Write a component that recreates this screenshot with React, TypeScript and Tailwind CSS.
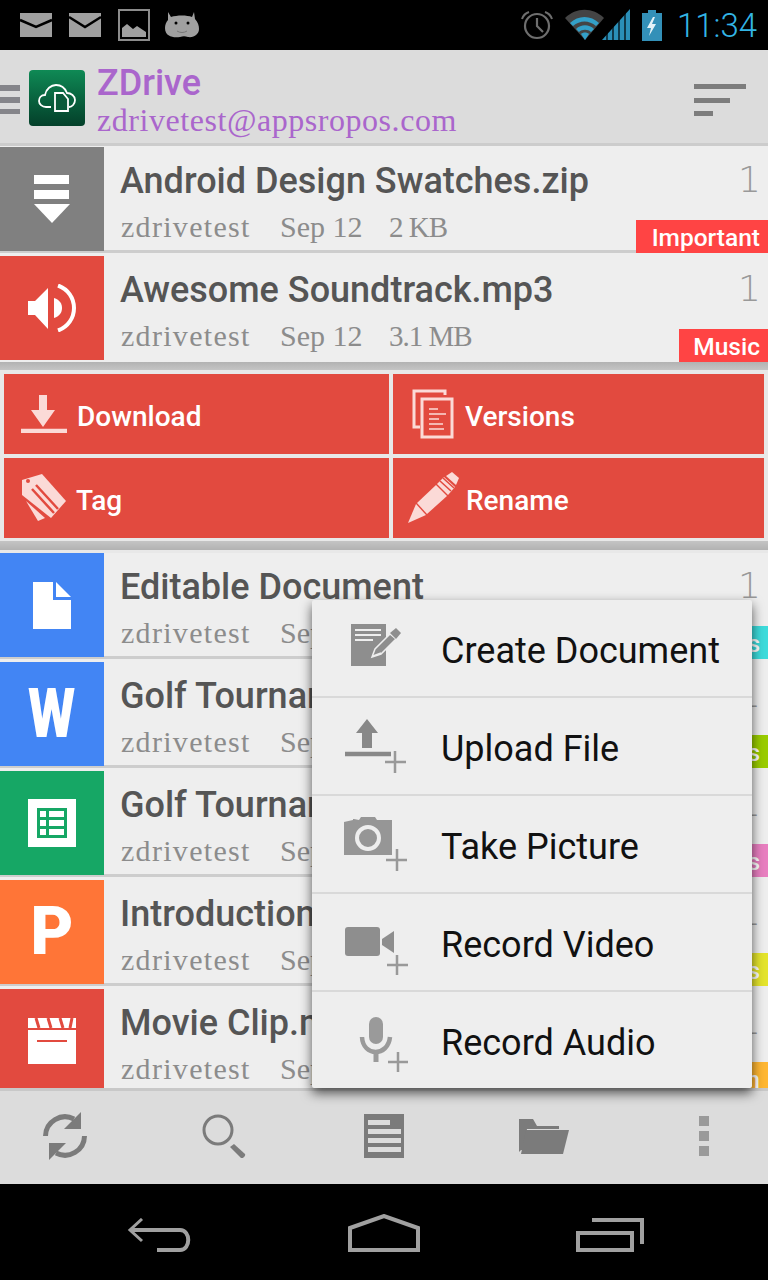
import React from 'react';

const files = [
  { name: 'Editable Document', color: 'bg-[#4285f4]', icon: 'doc', label: 'Docs', labelColor: 'bg-[#3ddbdb]' },
  { name: 'Golf Tournament.doc', color: 'bg-[#4285f4]', icon: 'word', label: 'Docs', labelColor: 'bg-[#99cc00]' },
  { name: 'Golf Tournament.xls', color: 'bg-[#16a765]', icon: 'sheet', label: 'Sheets', labelColor: 'bg-[#e87fc0]' },
  { name: 'Introduction.ppt', color: 'bg-[#ff7537]', icon: 'ppt', label: 'Slides', labelColor: 'bg-[#e4e42c]' },
  { name: 'Movie Clip.mp4', color: 'bg-[#e24a3f]', icon: 'movie', label: 'Fun', labelColor: 'bg-[#ffb733]' },
];

const roboto = 'font-["Roboto",sans-serif]';
const slab = 'font-["Liberation_Serif",serif]';

const Mail = ({ open }: { open?: boolean }) => (
  <svg width="34" height="26" viewBox="0 0 34 26">
    <path d="M1 1h32v24H1z" fill="#a0a0a0" />
    <path d={open ? 'M1 5l16 10L33 5' : 'M1 8l16 7 16-7'} fill="none" stroke="#000" strokeWidth="2.5" />
  </svg>
);

const FileIcon = ({ icon }: { icon: string }) => {
  if (icon === 'doc') {
    return (
      <svg width="38" height="47" viewBox="0 0 38 47">
        <path d="M0 0h20v18h18v29H0z" fill="#fff" />
        <path d="M23 0l15 15H23z" fill="#fff" />
      </svg>
    );
  }
  if (icon === 'word') {
    return <span className={`${roboto} text-[68px] leading-none font-black text-white scale-x-[.8]`}>W</span>;
  }
  if (icon === 'ppt') {
    return <span className={`${roboto} text-[66px] leading-none font-black text-white`}>P</span>;
  }
  if (icon === 'sheet') {
    return (
      <svg width="48" height="48" viewBox="0 0 48 48">
        <path d="M0 0h48v48H0z" fill="#fff" />
        <path d="M9 9h30v30H9z" fill="#16a765" />
        <path d="M12 12h6v6h-6zM21 12h15v6H21zM12 21h6v6h-6zM21 21h15v6H21zM12 30h6v6h-6zM21 30h15v6H21z" fill="#fff" />
      </svg>
    );
  }
  if (icon === 'movie') {
    return (
      <svg width="48" height="46" viewBox="0 0 48 46">
        <path d="M0 0h48v10H0z" fill="#fff" />
        <path d="M8 0l3 10M20 0l3 10M32 0l3 10M44 0l-2 10" stroke="#e24a3f" strokeWidth="3" />
        <path d="M0 12h48v34H0z" fill="#fff" />
        <path d="M9 23h30" stroke="#e24a3f" strokeWidth="2" />
      </svg>
    );
  }
  if (icon === 'zip') {
    return (
      <svg width="36" height="48" viewBox="0 0 36 48">
        <path d="M0 0h35v9H0zM0 15h35v9H0z" fill="#fff" />
        <path d="M0 29h36L18 48z" fill="#fff" />
      </svg>
    );
  }
  return (
    <svg width="48" height="48" viewBox="0 0 48 48">
      <path d="M0 17h7L20 4v41L7 31H0z" fill="#fff" />
      <path d="M26 14c6 2 8 6 8 10s-2 8-8 10z" fill="#fff" />
      <path d="M30 1.5C40 5 46 14 46 24S40 43 30 46.5" fill="none" stroke="#fff" strokeWidth="4" />
    </svg>
  );
};

const Row = ({ name, color, icon, size, label, labelColor, labelWidth, flat }: {
  name: string; color: string; icon: string; size?: string; label: string; labelColor: string; labelWidth: string; flat?: boolean;
}) => (
  <div className={`relative flex h-[106px] shrink-0 bg-[#eeeeee] ${flat ? '' : 'mb-[3px] border-b-[3px] border-[#cdcdcd]'}`}>
    <div className={`flex h-[104px] w-[104px] shrink-0 items-center justify-center ${color}`}>
      <FileIcon icon={icon} />
    </div>
    <div className="min-w-0 flex-1 pl-[17px]">
      <div className={`${roboto} mt-[11px] ml-[-1px] h-[46px] text-[36px] leading-[46px] font-medium whitespace-nowrap text-[#555555]`}>{name}</div>
      <div className={`${slab} mt-[5px] flex text-[30px] leading-[36px] text-[#8c8c8c]`}>
        <span className="w-[159px] tracking-[1.3px]">zdrivetest</span>
        <span className="w-[109px]">Sep 12</span>
        {size && <span className="text-[29px] tracking-[-1px]">{size}</span>}
      </div>
    </div>
    <div className='absolute top-[10px] right-[7px] font-["DejaVu_Sans",sans-serif] text-[36px] leading-[46px] font-extralight text-[#999999]'>1</div>
    <div className={`${roboto} absolute right-0 flex h-[33px] items-center justify-end pt-[4px] pr-[8px] text-[24.5px] font-medium text-white ${flat ? 'bottom-0' : 'bottom-[-3px]'} ${labelWidth} ${labelColor}`}>{label}</div>
  </div>
);

const menuItems = [
  {
    name: 'Create Document',
    icon: (
      <svg width="60" height="50" viewBox="0 0 60 50" className="mt-[-4px]">
        <path d="M7 3h35v42H7z" fill="#8e8e8e" />
        <path d="M11 9h26M11 14h26M11 19h18" stroke="#eeeeee" strokeWidth="2" />
        <path d="M28 36l3-8 15-15 6 5-15 15z" fill="#8e8e8e" stroke="#eeeeee" strokeWidth="1.5" />
        <path d="M46 12l6-5 5 5-5 6z" fill="#8e8e8e" />
        <path d="M29 35l8-3" stroke="#eeeeee" strokeWidth="1.5" />
      </svg>
    ),
  },
  {
    name: 'Upload File',
    icon: (
      <svg width="64" height="54" viewBox="0 0 64 54">
        <path d="M23 0l11 14h-6v15h-10V14h-6z" fill="#888888" />
        <path d="M1 35h46" stroke="#888888" strokeWidth="4.5" />
        <path d="M51 32v22M41 43h21" stroke="#999999" strokeWidth="2.5" />
      </svg>
    ),
  },
  {
    name: 'Take Picture',
    icon: (
      <svg width="64" height="54" viewBox="0 0 64 54">
        <path d="M0 5l9-2v-1h1l5 1 2-3h14l2 3h15v35H0z" fill="#969696" />
        <circle cx="24" cy="21" r="11" fill="#969696" stroke="#eeeeee" strokeWidth="4" />
        <path d="M53 32v22M42 43h21" stroke="#999999" strokeWidth="2.5" />
      </svg>
    ),
  },
  {
    name: 'Record Video',
    icon: (
      <svg width="64" height="50" viewBox="0 0 64 50" className="mt-[20px]">
        <rect x="1" y="0" width="35" height="29" rx="3" fill="#8e8e8e" />
        <path d="M38 12l12-8v22l-12-8z" fill="#8e8e8e" />
        <path d="M53 28v20M43 38h21" stroke="#999999" strokeWidth="2.5" />
      </svg>
    ),
  },
  {
    name: 'Record Audio',
    icon: (
      <svg width="64" height="64" viewBox="0 0 64 64">
        <rect x="25" y="9" width="14" height="27" rx="7" fill="#9a9a9a" />
        <path d="M18 29c1 20 26 20 28 0" fill="none" stroke="#9a9a9a" strokeWidth="4.5" />
        <path d="M32 42v12" stroke="#9a9a9a" strokeWidth="5" />
        <path d="M54 44v20M44 54h20" stroke="#999999" strokeWidth="2.5" />
      </svg>
    ),
  },
];

export default function App() {
  return (
    <div className="relative flex h-[1280px] w-[768px] flex-col overflow-hidden bg-black">
      {/* Status bar */}
      <div className="flex h-[50px] shrink-0 items-center bg-black pl-[19px]">
        <Mail />
        <div className="ml-[15px]"><Mail open /></div>
        <svg width="32" height="32" viewBox="0 0 32 32" className="ml-[16px]">
          <path d="M1 1h30v30H1z" fill="none" stroke="#8c8c8c" strokeWidth="2" />
          <path d="M4 28v-9l5-4 6 5 4-3 9 6v5z" fill="#a0a0a0" />
        </svg>
        <svg width="34" height="26" viewBox="0 0 34 26" className="ml-[15px]">
          <path d="M3 0l3 5c6-2 16-2 21 0l2-5 1 7c3 3 4 7 4 10 0 5-5 9-11 8-3-1-5-1-8 0-6 1-15 0-15-9 0-3 1-6 3-8z" fill="#a0a0a0" />
          <circle cx="11" cy="11" r="1.5" fill="#000" />
          <circle cx="23" cy="11" r="1.5" fill="#000" />
          <path d="M12 19c3 2 7 2 10 0" stroke="#777" fill="none" />
        </svg>
        <svg width="32" height="30" viewBox="0 0 32 30" className="ml-[322px]">
          <circle cx="16" cy="16" r="12" fill="none" stroke="#6e6e6e" strokeWidth="2.2" />
          <path d="M16 8v8l6 6" fill="none" stroke="#6e6e6e" strokeWidth="2.2" />
          <path d="M1 9c1-3 4-6 7-7M31 9c-1-3-4-6-7-7" fill="none" stroke="#6e6e6e" strokeWidth="2" />
        </svg>
        <svg width="66" height="32" viewBox="0 0 66 32" className="ml-[12px]">
          <path d="M0 9C11-2 28-2 39 9L20 31z" fill="#444444" />
          <path d="M5 14C13 6 26 6 34 14l-3 3C24 11 15 11 8 17z" fill="#33a0c8" />
          <path d="M11 20c5-5 13-5 18 0l-3 3c-3-3-9-3-12 0z" fill="#33a0c8" />
          <path d="M16 25c2-2 6-2 8 0l-4 6z" fill="#33a0c8" />
          <path d="M37 31L65 0v31z" fill="#2a8fb8" />
          <path d="M42 20v11M48 14v17M54 8v23M60 2v29" stroke="#000" strokeWidth="1.2" />
        </svg>
        <svg width="20" height="31" viewBox="0 0 20 31" className="ml-[11px]">
          <path d="M6 0h8v3h6v28H0V3h6z" fill="#3390b8" />
          <path d="M11 7l-6 11h4l-2 8 7-12h-4l3-7z" fill="#e3f2f8" />
        </svg>
        <span className={`${roboto} ml-[15px] text-[33px] leading-none font-light text-[#33b5e5]`}>11:34</span>
      </div>

      {/* Header */}
      <div className="flex h-[93px] shrink-0 items-center bg-[#dcdcdc] pr-[22px]">
        <div className="mt-[6px] flex w-[20px] flex-col">
          <div className="h-[6px] bg-[#85858a]" />
          <div className="mt-[6px] h-[6px] bg-[#85858a]" />
          <div className="mt-[6px] h-[5px] bg-[#85858a]" />
        </div>
        <div className="mt-[3px] ml-[9px] flex h-[56px] w-[56px] items-center justify-center rounded-[4px] bg-gradient-to-b from-[#0f8a55] to-[#04402a]">
          <svg width="38" height="30" viewBox="0 0 38 30">
            <path d="M13 24H8c-4 0-7-3-7-6 0-3 2-6 6-6 1-6 6-10 11-10 5 0 9 3 11 8 4 0 8 3 8 7 0 4-3 7-6 7" fill="none" stroke="#fff" strokeWidth="1.8" />
            <path d="M17 10h8l5 6v12H17z" fill="#0a5a3a" stroke="#fff" strokeWidth="1.8" />
          </svg>
        </div>
        <div className="mt-[6px] ml-[12px] flex-1 text-[#aa66cc]">
          <div className={`${roboto} text-[36px] leading-[42px] font-medium`}>ZDrive</div>
          <div className={`${slab} text-[32px] leading-[33px] tracking-[0.55px]`}>zdrivetest@appsropos.com</div>
        </div>
        <div className="mt-[6px] flex w-[52px] flex-col">
          <div className="h-[5px] w-[52px] bg-[#7d7d7d]" />
          <div className="mt-[9px] h-[5px] w-[36px] bg-[#7d7d7d]" />
          <div className="mt-[8px] h-[5px] w-[19px] bg-[#7d7d7d]" />
        </div>
      </div>
      <div className="h-[4px] shrink-0 border-t-[3px] border-[#cccccc] bg-[#eeeeee]" />

      {/* List */}
      <div className="min-h-0 flex-1 overflow-hidden bg-[#eeeeee]">
        <Row name="Android Design Swatches.zip" color="bg-[#808080]" icon="zip" size="2 KB" label="Important" labelColor="bg-[#ff4444]" labelWidth="w-[132px]" />
        <Row name="Awesome Soundtrack.mp3" color="bg-[#e24a3f]" icon="audio" size="3.1 MB" label="Music" labelColor="bg-[#ff4444]" labelWidth="w-[89px]" flat />

        {/* Expanded actions */}
        <div className="flex h-[191px] flex-col bg-[#e8e8e8]">
          <div className="h-[8px] shrink-0 bg-gradient-to-b from-[#b2b2b2] to-[#c4c4c4]" />
          <div className={`${roboto} mt-[4px] grid grid-cols-[385px_371px] grid-rows-[80px_80px] gap-[4px] px-[4px] text-[28px] font-medium text-white`}>
            <div className="flex items-center bg-[#e24a3f] pl-[17px]">
              <svg width="46" height="38" viewBox="0 0 46 38">
                <path d="M18 0h8v15h8L22 32 10 15h8z" fill="#fbdad7" />
                <path d="M0 36h46" stroke="#fbdad7" strokeWidth="4.5" />
              </svg>
              <span className="mt-[5px] ml-[10px]">Download</span>
            </div>
            <div className="flex items-center bg-[#e24a3f] pl-[19px]">
              <svg width="42" height="50" viewBox="0 0 42 50">
                <path d="M8 38H2V2h31v4" fill="none" stroke="#fbdad7" strokeWidth="3" />
                <path d="M10 10h30v38H10z" fill="none" stroke="#fbdad7" strokeWidth="3" />
                <path d="M17 20h9M17 25h17M17 30h10M17 35h14M17 40h15" stroke="#fbdad7" strokeWidth="1.6" />
              </svg>
              <span className="mt-[5px] ml-[11px]">Versions</span>
            </div>
            <div className="flex items-center bg-[#e24a3f] pl-[18px]">
              <svg width="44" height="48" viewBox="0 0 44 48">
                <path d="M0 6l20-6 24 27-15 17L0 21z" fill="#fbdad7" />
                <circle cx="6" cy="7" r="2" fill="#e24a3f" />
                <path d="M9 16l22 24M13 12l22 24" stroke="#e24a3f" strokeWidth="2.5" transform="translate(1 -1)" />
                <path d="M4 27l12 20 7-3" fill="#fbdad7" />
              </svg>
              <span className="mt-[5px] ml-[10px]">Tag</span>
            </div>
            <div className="flex items-center bg-[#e24a3f] pl-[15px]">
              <svg width="51" height="52" viewBox="0 0 51 52">
                <path d="M0 51l8-19 10 11z" fill="#fbdad7" />
                <path d="M9 31l19-18 11 11-20 18z" fill="#fbdad7" />
                <path d="M29 12l7-7 11 10-7 8z" fill="#fbdad7" />
                <path d="M32 9l11 10M35 6l11 10" stroke="#e24a3f" strokeWidth="1.6" />
                <path d="M38 4l6-4 7 6-3 7z" fill="#fbdad7" />
              </svg>
              <span className="mt-[5px] ml-[7px]">Rename</span>
            </div>
          </div>
          <div className="mt-[3px] h-[9px] shrink-0 bg-gradient-to-b from-[#c4c4c4] to-[#b2b2b2]" />
        </div>

        {files.map((file) => (
          <Row key={file.icon} name={file.name} color={file.color} icon={file.icon} label={file.label} labelColor={file.labelColor} labelWidth="w-[132px]" />
        ))}
      </div>

      {/* Bottom bar */}
      <div className="flex h-[96px] shrink-0 items-center border-t-[3px] border-[#c8c8c8] bg-[#dcdcdc] pb-[3px] pl-[43px]">
        <svg width="44" height="48" viewBox="0 0 44 48">
          <path d="M2.5 24A19.5 19.5 0 0 1 31 7" fill="none" stroke="#7b7b7b" strokeWidth="5" />
          <path d="M38 0v17H21z" fill="#7b7b7b" />
          <path d="M41.5 24A19.5 19.5 0 0 1 13 41" fill="none" stroke="#7b7b7b" strokeWidth="5" />
          <path d="M6 48V31h17z" fill="#7b7b7b" />
        </svg>
        <svg width="44" height="44" viewBox="0 0 44 44" className="ml-[115px]">
          <circle cx="16" cy="16" r="14" fill="none" stroke="#7b7b7b" strokeWidth="3" />
          <path d="M32 30l11 10c1 2-2 5-4 4L28 33z" fill="#7b7b7b" />
        </svg>
        <svg width="40" height="44" viewBox="0 0 40 44" className="ml-[118px]">
          <path d="M0 0h40v44H0z" fill="#7b7b7b" />
          <path d="M4 6h22v5H4zM4 15h33v5H4zM4 24h33v5H4zM4 33h33v5H4z" fill="#dcdcdc" />
        </svg>
        <svg width="50" height="35" viewBox="0 0 50 35" className="ml-[115px]">
          <path d="M0 0h14l4 7h22v3H8L4 31h-2L0 33z" fill="#7b7b7b" />
          <path d="M7 11h43l-6 24H2z" fill="#7b7b7b" />
        </svg>
        <div className="ml-[130px] flex w-[10px] flex-col gap-[5px]">
          <div className="h-[10px] bg-[#9a9a9a]" />
          <div className="h-[10px] bg-[#9a9a9a]" />
          <div className="h-[10px] bg-[#9a9a9a]" />
        </div>
      </div>

      {/* Navigation bar */}
      <div className="flex h-[96px] shrink-0 items-start bg-black pt-[30px] pl-[127px]">
        <svg width="66" height="38" viewBox="0 0 66 38" className="mt-[4px]">
          <path d="M15 1L3 12l12 11" fill="none" stroke="#a0a0a0" strokeWidth="3" />
          <path d="M3 12h50c11 0 11 20 0 20H30" fill="none" stroke="#a0a0a0" strokeWidth="4" />
        </svg>
        <svg width="72" height="38" viewBox="0 0 72 38" className="ml-[155px]">
          <path d="M2 14L36 2l34 12v22H2z" fill="none" stroke="#a0a0a0" strokeWidth="4" />
        </svg>
        <svg width="68" height="34" viewBox="0 0 68 34" className="mt-[4px] ml-[156px]">
          <path d="M2 15h54v17H2z" fill="none" stroke="#a0a0a0" strokeWidth="4" />
          <path d="M16 2h50v24" fill="none" stroke="#a0a0a0" strokeWidth="4" />
        </svg>
      </div>

      {/* Popup menu */}
      <div className={`${roboto} absolute top-[600px] left-[312px] flex w-[440px] flex-col rounded-[2px] bg-[#eeeeee] text-[36px] text-[#111111] shadow-[0_5px_12px_rgba(0,0,0,0.65)]`}>
        {menuItems.map((item, i) => (
          <div key={item.name} className={`flex items-center pl-[32px] ${i < 4 ? 'h-[98px] border-b-2 border-[#d9d9d9]' : 'h-[96px]'}`}>
            <div className="flex w-[98px] shrink-0 items-center">{item.icon}</div>
            <span className="mt-[6px] ml-[-1px]">{item.name}</span>
          </div>
        ))}
      </div>
    </div>
  );
}
